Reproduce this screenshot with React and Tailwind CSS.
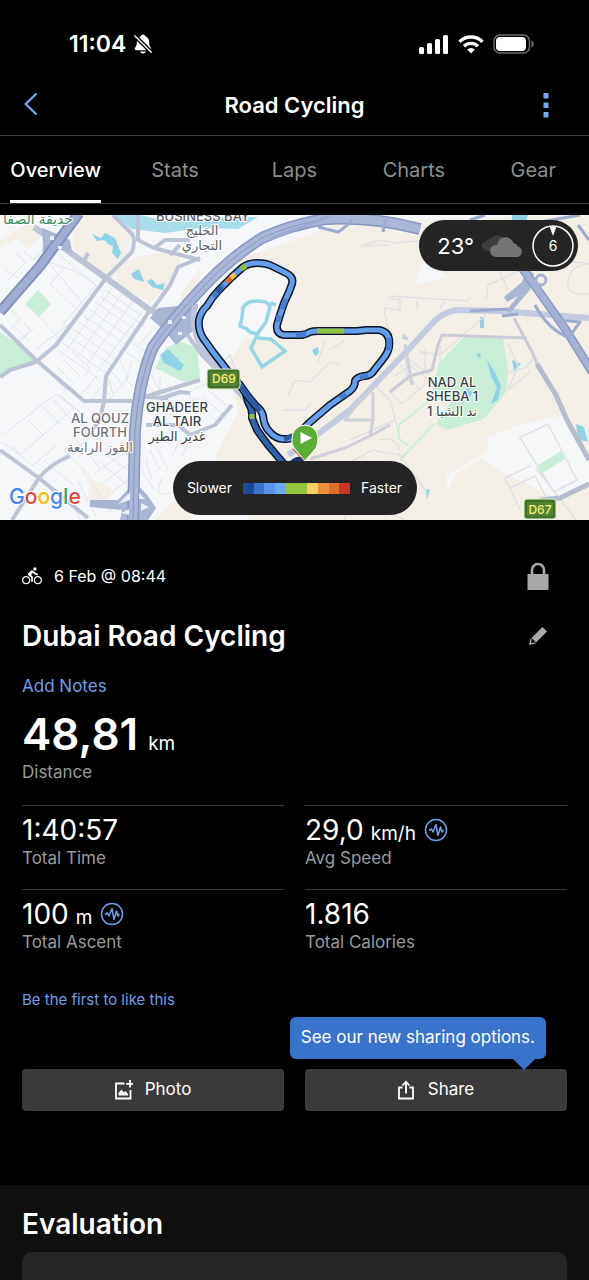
import React, { useState } from "react";
import { IoNotificationsOff } from "react-icons/io5";
import { MdDirectionsBike } from "react-icons/md";

const tabs = ["Overview", "Stats", "Laps", "Charts", "Gear"];

const stats = [
    { label: "Total Time", value: "1:40:57" },
    { label: "Avg Speed", value: "29,0", unit: "km/h", insight: true },
    { label: "Total Ascent", value: "100", unit: "m", insight: true },
    { label: "Total Calories", value: "1.816" },
];

const speedColors = [
    "bg-[#1c4a9a]",
    "bg-[#3a73cc]",
    "bg-[#5794ee]",
    "bg-[#6ba7f5]",
    "bg-[#94c63d]",
    "bg-[#94c63d]",
    "bg-[#f8cf63]",
    "bg-[#f1903a]",
    "bg-[#df6d2d]",
    "bg-[#cb3527]",
];

const StatusBar = () => (
    <div className="flex h-19 items-center justify-between pt-3 pr-[54px] pl-[69px]">
        <div className="flex items-center gap-1.5">
            <span className="text-[23px] leading-8 font-semibold">11:04</span>
            <IoNotificationsOff className="h-[22px] w-[22px]" />
        </div>
        <div className="flex items-center gap-[9px]">
            <svg viewBox="0 0 30 19" className="h-[19px] w-[30px]" fill="currentColor">
                <rect x="0" y="12" width="5" height="7" rx="1.5" />
                <rect x="8" y="8" width="5" height="11" rx="1.5" />
                <rect x="16" y="4" width="5" height="15" rx="1.5" />
                <rect x="24" y="0" width="5" height="19" rx="1.5" />
            </svg>
            <svg viewBox="0 0 26 19" className="h-[19px] w-[26px]" fill="none" stroke="currentColor" strokeWidth="3.4">
                <path d="M1.5 6.7a16.5 16.5 0 0 1 23 0" />
                <path d="M6 11.2a10 10 0 0 1 14 0" />
                <path d="M9.2 14.6a5.4 5.4 0 0 1 7.6 0L13 18.6Z" fill="currentColor" stroke="none" />
            </svg>
            <svg viewBox="0 0 42 20" className="h-5 w-[42px]">
                <rect x="1" y="1" width="35.5" height="18" rx="6" fill="none" stroke="#6b6b6b" strokeWidth="1.5" />
                <rect x="3" y="3" width="30" height="14" rx="4" fill="#fff" />
                <path d="M38.5 6.5c3 .8 3 6.2 0 7Z" fill="#6b6b6b" />
            </svg>
        </div>
    </div>
);

const ROUTE =
    "M257 263C264 263 268 264 272 266L286 273Q294 277 292 284L289 292L284 303L280 315L277 325Q276 334 284 335L302 335Q307 334 310 332Q313 331 318 331L357 331L366 330L379 330Q391 332 389 347Q388 353 383 359L372 373Q369 376 364 376Q357 377 355 381Q355 387 350 391L330 405L309 423L298 434Q293 439 286 439Q276 440 269 431Q264 426 263 416Q262 410 256 406L247 395L240 385L227 370L213 352L203 338Q198 330 199 320Q201 311 207 306Q212 297 219 290L232 277L243 267Q249 263 257 263Z";
const BRANCH = "M246 394L248 402Q253 410 252 418L257 430L268 445L284 464";

const MapDrawing = () => (
    <svg
        viewBox="0 215 589 305"
        preserveAspectRatio="xMidYMid slice"
        className="absolute inset-0 h-full w-full"
        role="img"
        aria-label="Route map"
    >
        <rect x="0" y="215" width="589" height="305" fill="#f5f6f8" />

        {/* land */}
        <g fill="#f3efe6">
            <path d="M345 222L589 215V520H250L236 490L215 456L238 412L228 365L244 338L275 339L298 280L262 258L215 268Z" />
            <path d="M76 215H108L136 232L126 248L130 262L110 279L84 264L72 244ZM117 273L138 256L175 252L181 262L164 291L150 303L117 283ZM0 240L30 222L42 236L22 256L0 262ZM182 293L200 268V300L180 306Z" />
            <path d="M90 478L112 488L106 506L88 499Z M156 520L168 505L190 500V520Z" />
        </g>
        <path d="M0 248L18 238L30 250L10 268L0 270Z" fill="#f5f6f8" />
        <path d="M254 271L272 271L286 281L274 320L274 337L244 339L228 364L206 334L204 318L222 292Z" fill="#f6f6f6" />
        <path d="M520 425L565 415L589 455V485L560 500L510 476L480 458L455 475L448 490L446 476L490 450L486 438Z" fill="#f5f6f8" />
        <path d="M414 285L425 255L448 277Z" fill="#f5f6f8" />

        {/* parks */}
        <g fill="#c8eed7">
            <path d="M38 290L51 304L39 317L25 304Z M0 332L36 357L30 366L0 374Z M155 368L166 348L180 341L197 348L200 378L184 382Z" />
            <path d="M439 363L464 337L503 339L508 370L506 392L484 419L447 430L436 424L452 400L430 400Z" />
            <path d="M537 466L561 451L565 459L541 474Z" />
        </g>
        <path d="M430 400L400 424Q394 440 408 445M400 460L434 424" fill="none" stroke="#c8eed7" strokeWidth="2" />

        {/* water */}
        <g fill="#8fd4e6">
            <path d="M92 234L97 241L104 240L108 244L113 246L112 253L118 259L121 253L115 238L105 233L101 238ZM131 274L139 269L144 282L134 279ZM147 281L152 279L157 285L165 283L163 290L152 287ZM160 355L168 349L184 365L180 371L164 363Z" />
            <path d="M112 215H140L170 222L230 217H258L238 229L200 228L165 233L132 229Z" opacity=".75" />
            <path d="M312 350L318 347L319 353L315 356ZM480 317H484V328H480ZM512 360L521 364L514 371ZM576 424L584 427L588 442L578 439ZM426 490L430 489L427 500ZM512 215H528L526 222H512Z" />
            <path d="M487 360L495 372L501 386L498 400L491 404L497 388L491 376ZM466 388L473 392L470 397L464 394ZM476 355L480 353L481 359Z" />
        </g>
        <g fill="none" stroke="#96d6e5" strokeWidth="3.5">
            <path d="M243 308Q246 301 257 301Q269 301 270 307L266 322L258 333Q250 334 247 329L240 326Q242 319 243 308ZM270 303L276 305" />
            <path d="M258 333L251 348L262 367L285 351L271 339L258 338" />
        </g>

        {/* residential streets */}
        <g fill="none" stroke="#dfe3ea" strokeWidth="1">
            <path d="M22 292L48 262L75 271L96 285M48 262L85 306L68 325L36 349M58 254L96 285L62 326M33 309L60 340M12 325L28 340M64 268L50 284L88 320M6 306L20 318L10 330M14 345L30 330L24 323M34 328L20 342M8 280L26 262L14 252M4 268L18 278M24 252L34 260L44 248" />
            <path d="M105 290L148 320M100 296L144 326M95 302L139 332M89 309L133 340M84 316L128 346M79 322L122 353M73 329L117 360M68 336L112 366M63 343L106 373M57 349L100 380M112 288L66 351M122 294L78 356M132 302L86 366M142 312L97 372" />
            <path d="M145 322L130 342L146 352M152 330L138 346M160 338L144 358M150 348L140 362L126 352M120 360L128 378L116 392M112 372L122 384M132 362L126 380L136 390M108 378L114 396L104 402M72 352L90 368L84 378M64 360L80 376M56 366L74 384M50 372L66 390M96 376L84 392M104 384L90 400" />
            <path d="M4 434L56 394L74 408L20 455L2 442M28 420L44 436M42 406L60 424M54 400L88 440L50 466M60 395L84 416M12 446L32 466L56 446M44 460L74 486M64 450L92 478M76 440L100 468M66 486L80 520M76 478L96 516M82 470L112 512M100 462L126 484M108 456L130 472M116 448L130 456M94 474L126 452M102 484L128 464M108 496L130 478" />
            <path d="M150 372L160 392L176 388M146 384L164 400M152 394L190 392L212 380M160 400V376M170 398V384M180 404L200 398M190 392V410M142 402L156 410M148 440H180M150 450L160 470M156 446L168 470M162 478Q152 500 170 492M142 470L154 490M146 460L152 480M180 440L172 456M190 440L182 456M196 402L216 420M202 396L222 414M208 390L230 408" />
        </g>
        <g fill="none" stroke="#dfe0e4" strokeWidth="1.5">
            <path d="M288 395L295 380L310 382L330 362L340 365M282 410L305 410L312 402M325 340L318 362M330 350L345 340M215 370L230 355L236 372M362 245L380 240L395 243L428 240M390 245L360 246M388 299L400 300L400 310L384 308L388 330" />
            <path d="M390 296L468 301L470 297M417 301V310M445 301L440 309M486 301L488 285L505 277L520 270M500 272L508 290M540 270Q562 258 589 264M589 294H578Q566 292 568 280Q572 265 589 264M486 315L440 355L420 352M440 345V360M425 350V372M405 358L408 382M508 344L518 366L508 390L530 372M508 372L525 368L535 357" />
            <path d="M519 438L548 424L577 480L554 492L520 438M505 478L530 466M536 468L576 520M510 488L535 476L558 520M505 478L520 510M560 488L574 482M340 468L372 450L400 455L425 490M350 440L395 420M372 382L390 400L398 430M395 376L410 366L430 380L402 404L390 392M400 365L420 390M410 360L430 375M380 440Q395 435 400 450M345 500V520M370 505L405 520" />
        </g>

        {/* secondary roads */}
        <g fill="none" stroke="#bcc5d5" strokeWidth="4" strokeLinejoin="round">
            <path d="M34 227L75 256L106 278L150 310L178 322" strokeWidth="6" />
            <path d="M106 278L80 313L56 345L36 362M36 362L10 370L0 377M0 325L36 360L84 401L132 401M144 397L200 380" />
            <path d="M113 215L132 234Q136 240 132 252L106 278M150 310L130 340L106 376L104 401L100 420L88 435" />
            <path d="M0 450L39 478L88 518M39 478Q50 464 70 456M39 478L12 520M160 399L180 392L190 393M152 310L170 285L178 267L200 258M145 397L168 398M146 425H178L190 435L215 425L232 405" />
            <path d="M138 215V240L154 248L200 260M154 248L165 240H190M88 253L84 261" />
            <path d="M170 255L180 245M178 322L202 355L222 375" />
            <path d="M288 455L310 440L350 410L378 381L408 350L430 326Q440 313 456 310L500 311L589 318" stroke="#c3cce0" strokeWidth="6" />
            <path d="M375 386L360 400L345 420H373V392M373 420L370 436L345 448L310 459M370 436L390 425" stroke="#ced1d9" strokeWidth="3" />
            <path d="M405 344L412 385M408 338Q402 340 404 334" stroke="#cbd1dc" strokeWidth="3" />
            <path d="M390 392L410 376L432 370L438 345L442 335L527 338M514 318L532 352L540 370" stroke="#c9ccd7" strokeWidth="3" />
            <path d="M537 364L556 395L567 420L589 460M540 500L560 498L589 484" stroke="#b5bdcc" strokeWidth="5" />
        </g>

        {/* highways */}
        <g fill="#a9b6d1">
            <path d="M42 228L55 233L70 240L72 252L58 249L42 262L43 245ZM158 308L198 304L194 330L176 345L164 330L150 318ZM135 482L148 496L156 508L148 520H120L122 510L90 507L90 500L118 500Z" />
            <path d="M526 268L534 274L530 290L510 313L506 311L518 296L507 302L504 297L522 282Z" />
        </g>
        <g fill="none" strokeLinejoin="round">
            <path d="M79 213L40 266L0 312" stroke="#8192bd" strokeWidth="11" />
            <path d="M79 213L40 266L0 312" stroke="#a0aed3" strokeWidth="7" />
            <path d="M133 522L135 430Q139 380 153 347Q172 320 202 288Q230 258 262 238Q290 225 325 219Q370 216 420 229" stroke="#8797c1" strokeWidth="12" />
            <path d="M133 522L135 430Q139 380 153 347Q172 320 202 288Q230 258 262 238Q290 225 325 219Q370 216 420 229" stroke="#aab6d6" strokeWidth="9" />
            <path d="M133 522L135 430Q139 380 153 347Q172 320 202 288Q230 258 262 238Q290 225 325 219" stroke="#8797c1" strokeWidth="1" />
            <path d="M195 305Q190 330 204 350L222 374L248 402" stroke="#bcc5dc" strokeWidth="6" />
            <path d="M270 239L330 216M318 227L338 232Q345 228 352 220M385 220L383 232" stroke="#9cabce" strokeWidth="3" />
            <path d="M520 265L545 300L566 330L592 372" stroke="#8a9bc3" strokeWidth="9" />
            <path d="M520 265L545 300L566 330L592 372" stroke="#a5b2d3" strokeWidth="6" />
            <path d="M470 311L508 309M502 316L518 314M535 305Q548 330 570 338M560 320L580 322L570 336M470 220L485 215M540 222L580 215M578 225L589 240" stroke="#9cabce" strokeWidth="3" />
            <circle cx="541" cy="280" r="5" stroke="#a5b2d3" strokeWidth="3" />
        </g>
        <g fill="#e9edf5">
            <path d="M118 504L130 492L130 500ZM139 493L145 499H139ZM141 503L149 507L141 511ZM121 513L129 509V515ZM168 320h4v4h-4zM178 332h4v3h-4zM182 316h4v3h-4zM50 236h4v4h-4zM58 246h4v3h-4z" />
        </g>

        {/* ridden track */}
        <g fill="none" strokeLinejoin="round">
            <path d={BRANCH} stroke="#10182c" strokeWidth="8" />
            <path d={BRANCH} stroke="#2f63ae" strokeWidth="5" />
            <path d={ROUTE} stroke="#0d1526" strokeWidth="8" />
            <path d={ROUTE} stroke="#659eea" strokeWidth="5" />
            <g strokeWidth="5">
                <path d="M213 297L224 285M286 299L282 309M279 315L278 322M296 335L306 334M389 338V350M346 394L340 398M368 375L360 378" stroke="#477fd0" />
                <path d="M240 385L256 406L260 411M228 371L236 380M217 292L222 287M284 439L296 435" stroke="#2b5aa6" />
                <path d="M227 282L232 277" stroke="#e2672b" />
                <path d="M231 278L235 274" stroke="#efc24a" />
                <path d="M241 269L246 266M317 331L344 331M252 414L252 419" stroke="#90c23e" />
            </g>
            <path d="M292 464Q298 458 304 462" stroke="#14356f" strokeWidth="7" />
        </g>

        {/* start pin */}
        <path d="M305 461L294 448Q291 444 292 438A13 13 0 1 1 318 438Q318 444 316 448Z" fill="#5aae35" stroke="#fff" strokeWidth="1" />
        <path d="M293 449L304 461" stroke="#c8382d" strokeWidth="1" />
        <path d="M300.5 432V444L312 438Z" fill="#fff" />

        {/* road shields */}
        <g fontFamily="Inter, sans-serif" fontSize="12" fontWeight="500" fill="#f5ee72" textAnchor="middle">
            <rect x="207" y="369" width="33" height="20" rx="3" fill="#548235" stroke="#dce9cb" />
            <rect x="209" y="371" width="29" height="16" rx="1" fill="#548235" stroke="#35601f" />
            <text x="224" y="383">D69</text>
            <rect x="524" y="499" width="32" height="20" rx="3" fill="#548235" stroke="#dce9cb" />
            <rect x="526" y="501" width="28" height="16" rx="1" fill="#548235" stroke="#35601f" />
            <text x="540" y="514">D67</text>
        </g>

        {/* place names */}
        <g textAnchor="middle" paintOrder="stroke" stroke="#fff" strokeWidth="2" strokeLinejoin="round" fontFamily="Inter, 'DejaVu Sans', sans-serif" fontSize="13" fontWeight="500" fill="#5b6068">
            <text x="203" y="221">BUSINESS BAY</text>
            <text x="202" y="235">الخليج</text>
            <text x="202" y="250">التجاري</text>
            <text x="38" y="224" fill="#3e8a66" fontSize="14">حديقة الصفا</text>
            <g fill="#6d7179">
                <text x="100" y="423">AL QOUZ</text>
                <text x="100" y="437">FOURTH</text>
                <text x="100" y="452">القوز الرابعة</text>
            </g>
            <g fill="#3c3f46">
                <text x="177" y="412">GHADEER</text>
                <text x="177" y="426">AL TAIR</text>
                <text x="177" y="441">غدير الطير</text>
                <text x="452" y="387">NAD AL</text>
                <text x="452" y="401">SHEBA 1</text>
                <text x="452" y="416">ند الشبا 1</text>
            </g>
        </g>
        <text x="9" y="504" fontFamily="Inter, sans-serif" fontSize="21" fontWeight="500" paintOrder="stroke" stroke="#fff" strokeWidth="2">
            <tspan fill="#4285f4">G</tspan>
            <tspan fill="#ea4335">o</tspan>
            <tspan fill="#fbbc05">o</tspan>
            <tspan fill="#4285f4">g</tspan>
            <tspan fill="#34a853">l</tspan>
            <tspan fill="#ea4335">e</tspan>
        </text>
    </svg>
);

const WeatherBadge = () => (
    <div className="absolute top-[5px] right-[11px] flex h-[51px] items-center rounded-full bg-[#242424] pr-1 pl-[18px]">
        <span className="text-[22px] leading-8">23°</span>
        <svg viewBox="0 0 42 26" className="ml-2 h-[26px] w-[42px]">
            <path d="M5 18a5 5 0 0 1-.5-10Q6 5 9 5.5A8 8 0 0 1 21 5Q24 8 23 12L10 18Z" fill="#3d3d3d" />
            <path d="M14 24a6 6 0 0 1 0-12h1A8.5 8.5 0 0 1 31.5 10a7 7 0 0 1 4.5 3.5A5.5 5.5 0 0 1 36 24Z" fill="#747474" />
        </svg>
        <svg viewBox="0 0 42 42" className="ml-2 h-[42px] w-[42px]">
            <circle cx="21" cy="21" r="20" fill="none" stroke="#fff" strokeWidth="1.5" />
            <path d="M17.5 1.5H24.5L21 11Z" fill="#fff" />
            <text x="21" y="26" fill="#fff" fontSize="14" fontFamily="Inter, sans-serif" textAnchor="middle">6</text>
        </svg>
    </div>
);

const SpeedLegend = () => (
    <div className="absolute bottom-[5px] left-1/2 flex h-[54px] w-[244px] -translate-x-1/2 items-center justify-center gap-[11px] rounded-full bg-[#242424] text-sm">
        <span>Slower</span>
        <div className="flex h-[11px] w-[107px]">
            {speedColors.map((color, i) => (
                <div key={i} className={`flex-1 ${color}`} />
            ))}
        </div>
        <span>Faster</span>
    </div>
);

const InsightIcon = () => (
    <svg viewBox="0 0 24 24" className="h-6 w-6" fill="none" stroke="#6f9fe8" strokeWidth="1.5">
        <circle cx="12" cy="12" r="10.5" />
        <path d="M5 12.5L7.5 11L9 14L12 6.5L14 17.5L16.5 9L18 14L19.5 12" strokeLinejoin="round" />
    </svg>
);

const Stat = ({ label, value, unit, insight }) => (
    <div className="border-t border-[#3c3c3c] pt-2 pb-[21px]">
        <div className="flex h-8 items-center gap-2">
            <p className="text-[28px] leading-8">
                {value}
                {unit && <span className="ml-[7px] text-[19px] leading-5">{unit}</span>}
            </p>
            {insight && (
                <button aria-label={`${label} insights`}>
                    <InsightIcon />
                </button>
            )}
        </div>
        <p className="mt-0.5 text-[17px] leading-5 text-[#9a9a9a]">{label}</p>
    </div>
);

const App = () => {
    const [activeTab, setActiveTab] = useState("Overview");

    return (
        <div className="min-h-screen overflow-x-hidden bg-black font-['Inter',sans-serif] text-white">
            <StatusBar />

            <header className="grid h-[60px] grid-cols-[1fr_auto_1fr] items-center border-b border-[#3c3c3c] px-6">
                <button aria-label="Back" className="justify-self-start">
                    <svg viewBox="0 0 14 24" className="mb-1 h-6 w-[14px]" fill="none" stroke="#6fa5ee" strokeWidth="2.4">
                        <path d="M12.5 1.5L1.8 12L12.5 22.5" />
                    </svg>
                </button>
                <h1 className="text-[22px] font-semibold">Road Cycling</h1>
                <button aria-label="More options" className="mr-4 justify-self-end">
                    <svg viewBox="0 0 6 25" className="h-[25px] w-[6px]" fill="#76a8ec">
                        <path d="M.5 0h5v5.5h-5zM.5 9.5h5V15h-5zM.5 19h5v5.5h-5z" />
                    </svg>
                </button>
            </header>

            <nav className="border-b border-[#3c3c3c]">
                <div className="-mx-1 grid h-[67px] grid-cols-5">
                    {tabs.map((tab) => (
                        <button
                            key={tab}
                            onClick={() => setActiveTab(tab)}
                            className={`justify-self-center border-y-[3px] border-t-transparent text-xl ${
                                activeTab === tab ? "border-b-white font-medium text-white" : "border-b-transparent text-[#8e8e8e]"
                            }`}
                        >
                            {tab}
                        </button>
                    ))}
                </div>
            </nav>

            <section className="relative mt-[11px] h-[305px] overflow-hidden">
                <MapDrawing />
                <WeatherBadge />
                <SpeedLegend />
            </section>

            <main className="px-[22px]">
                <div className="mt-[42px] flex h-7 items-center justify-between pr-[18px]">
                    <div className="flex items-center gap-3">
                        <MdDirectionsBike className="h-5 w-5" />
                        <span className="text-base">6 Feb @ 08:44</span>
                    </div>
                    <svg viewBox="0 0 22 28" className="h-7 w-[22px]" role="img" aria-label="Private">
                        <rect x="0.5" y="12" width="21" height="16" fill="#a9a9a9" />
                        <path d="M5 13V8a6 6 0 0 1 12 0V13" fill="none" stroke="#a9a9a9" strokeWidth="2.6" />
                    </svg>
                </div>

                <div className="mt-7 flex h-9 items-center justify-between pr-5">
                    <h2 className="text-[28px] font-semibold">Dubai Road Cycling</h2>
                    <button aria-label="Edit title">
                        <svg viewBox="0 0 18 18" className="h-[18px] w-[18px]" fill="#a9a9a9">
                            <path d="M13.5 0L18 4.5L7 15.5L2.5 11Z" />
                            <path d="M2.2 11.5L1 17L6.5 15.8" fill="none" stroke="#a9a9a9" strokeWidth="1.2" />
                            <path d="M.3 17.8L1.2 14.5L3.7 17Z" />
                        </svg>
                    </button>
                </div>

                <a href="#notes" className="mt-5 block text-[17px] leading-6 text-[#6f9fe8]">
                    Add Notes
                </a>

                <p className="mt-3 text-[44px] leading-12 font-semibold">
                    48,81<span className="ml-2.5 text-[19px] leading-5 font-normal">km</span>
                </p>
                <p className="mt-1 text-[17px] leading-5 text-[#9a9a9a]">Distance</p>

                <div className="mt-[23px] grid grid-cols-2 gap-x-[21px]">
                    {stats.map((stat) => (
                        <Stat key={stat.label} {...stat} />
                    ))}
                </div>

                <a href="#likes" className="mt-[17px] block text-[15px] leading-5 text-[#6f9fe8]">
                    Be the first to like this
                </a>

                <div className="mt-[59px] grid grid-cols-2 gap-x-[21px]">
                    <button className="flex h-[42px] items-center justify-center gap-3 rounded bg-[#3a3a3a] text-[17px]">
                        <svg viewBox="0 0 18 20" className="h-5 w-[18px]" fill="none" stroke="currentColor" strokeWidth="1.8">
                            <path d="M9.5 3.5H1V18.5H15.5V10" />
                            <path d="M15 0V7.5M11.2 3.8H18.5" />
                            <path d="M3.5 15.5V13L6.5 9.5L9 12.5L10.5 11L13 14V15.5Z" fill="currentColor" stroke="none" />
                        </svg>
                        Photo
                    </button>
                    <div className="relative">
                        <button className="flex h-[42px] w-full items-center justify-center gap-[14px] rounded bg-[#3a3a3a] text-[17px]">
                            <svg viewBox="0 0 16 20" className="h-5 w-4" fill="none" stroke="currentColor" strokeWidth="1.8">
                                <path d="M4.5 7.5H1V18.5H15V7.5H11.5" />
                                <path d="M8 13.5V2M4.5 5.5L8 1.8L11.5 5.5" />
                            </svg>
                            Share
                        </button>
                        <div
                            role="tooltip"
                            className="absolute right-[21px] bottom-full mb-[10px] flex h-[42px] items-center rounded-md bg-[#3873cc] px-[11px] text-[17px] whitespace-nowrap"
                        >
                            See our new sharing options.
                            <span className="absolute top-full right-[11px] border-x-[11px] border-t-[11px] border-x-transparent border-t-[#3873cc]" />
                        </div>
                    </div>
                </div>
            </main>

            <section className="mt-[74px] bg-[#101010] px-[22px] pt-[23px]">
                <h2 className="text-[28px] leading-8 font-semibold">Evaluation</h2>
                <div className="mt-3 h-7 rounded-t-[10px] bg-[#252525]" />
            </section>
        </div>
    );
};

export default App;
